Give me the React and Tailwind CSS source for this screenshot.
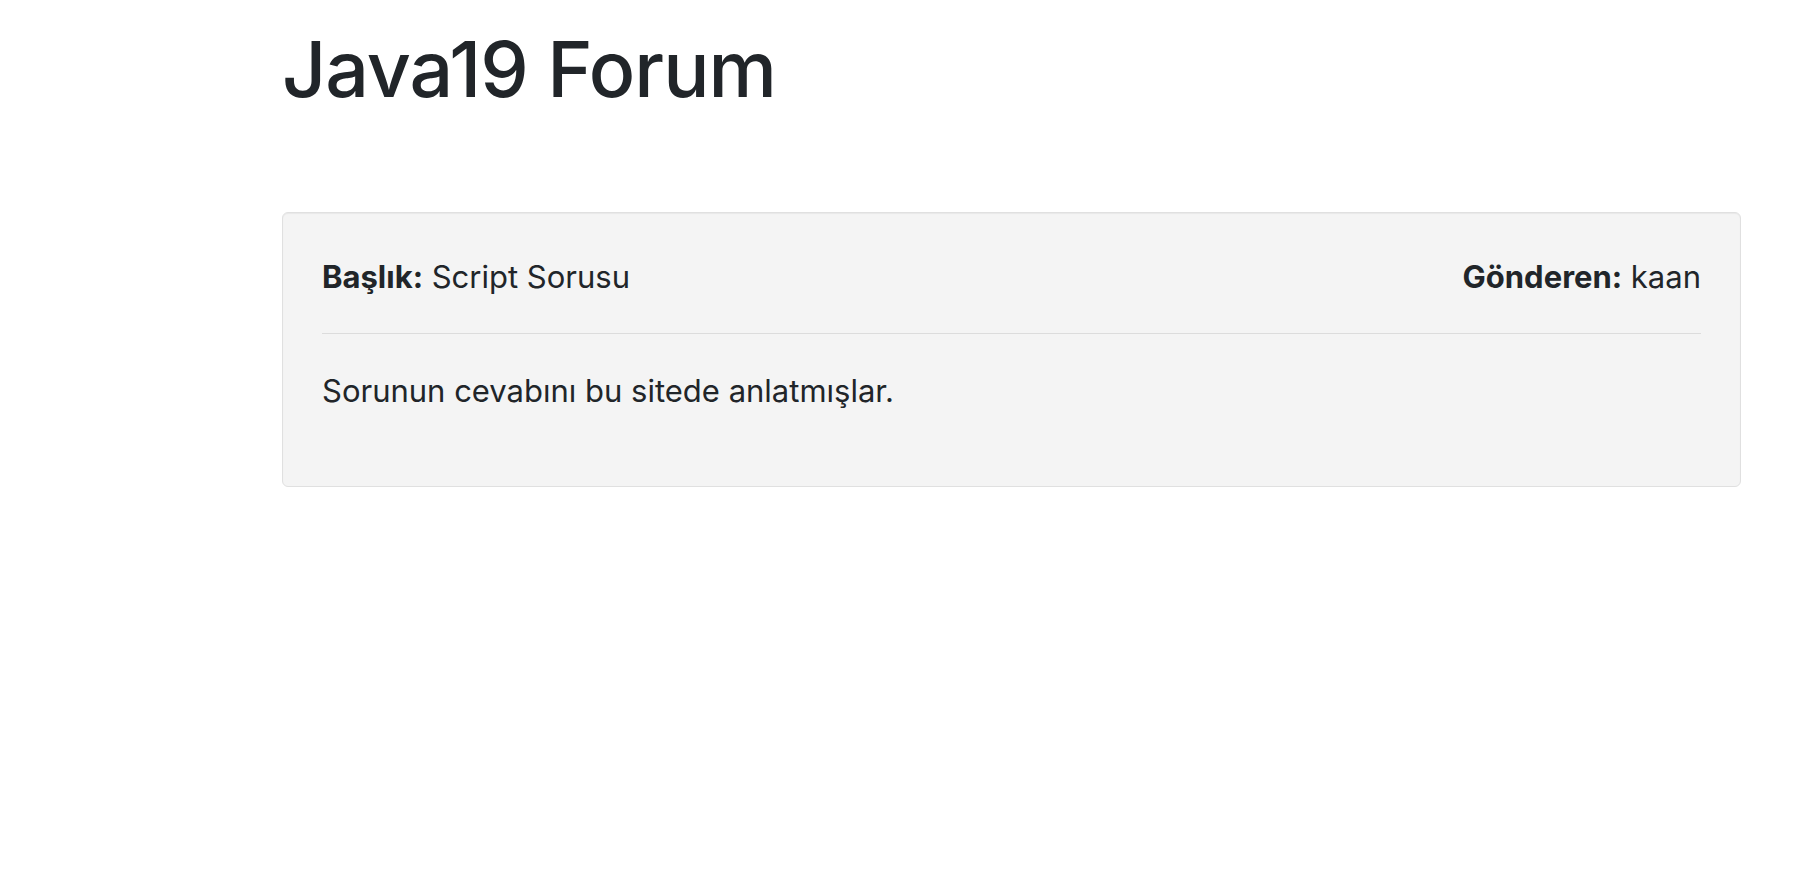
export default function App() {
  return (
    <div className="min-h-screen bg-white text-[#212529] font-['Inter','Liberation_Sans',sans-serif]">
      <div className="pl-[282px] pr-[57px]">
        <h1 className="pt-[31px] text-[77px] leading-none font-medium tracking-[-1px]">Java19 Forum</h1>

        <div className="mt-[104px] bg-[#f4f4f4] border border-[#e0e0e0] rounded-[6px] shadow-[inset_0_1px_1px_rgba(0,0,0,0.05)] px-[39px] pt-[45px] pb-[77px]">
          <div className="flex items-center justify-between text-[31px] leading-[1.2]">
            <div>
              <span className="font-bold">Başlık:</span> Script Sorusu
            </div>
            <div>
              <span className="font-bold">Gönderen:</span> kaan
            </div>
          </div>
          <hr className="mt-[38px] border-t border-[#dcdcdc]" />
          <p className="mt-[38px] text-[31px] leading-[1.2]">Sorunun cevabını bu sitede anlatmışlar.</p>
        </div>
      </div>
    </div>
  )
}
